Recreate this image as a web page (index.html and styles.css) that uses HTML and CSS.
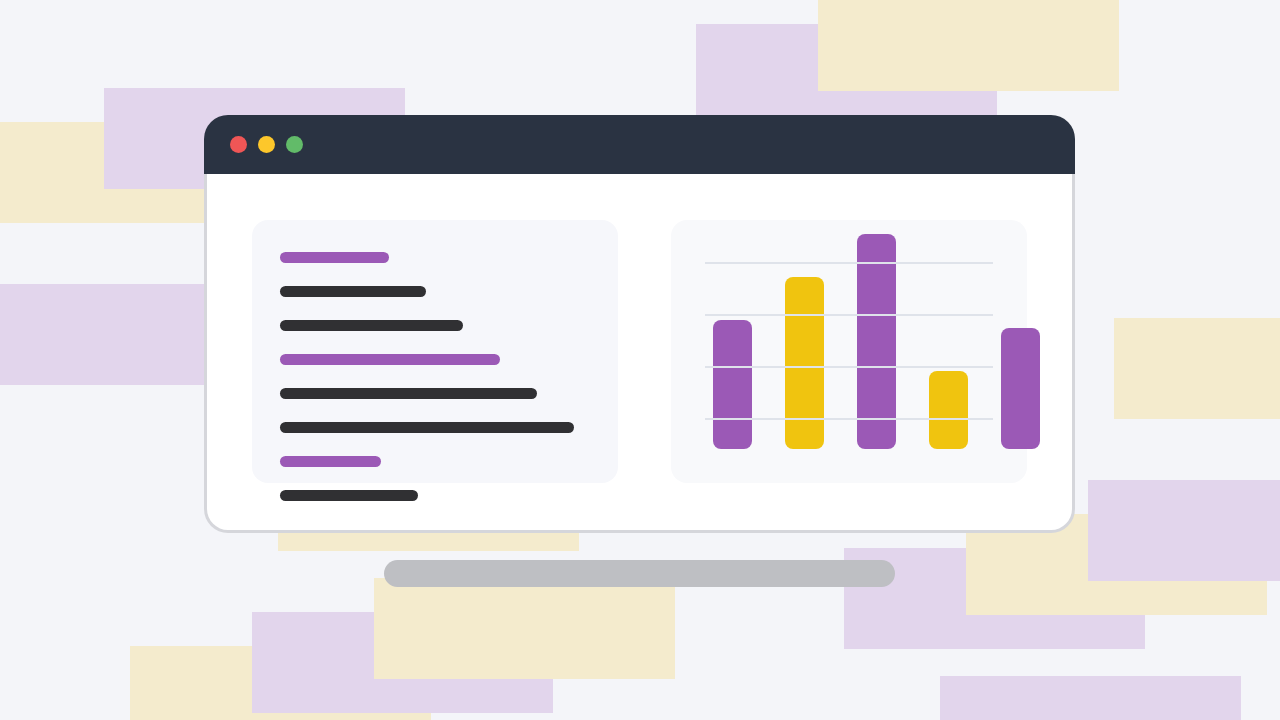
FILE: index.html
```html
<!DOCTYPE html>
<html lang="en">
<head>
  <meta charset="UTF-8">
  <meta name="viewport" content="width=device-width, initial-scale=1.0">
  <title>Dashboard Preview</title>
  <link rel="stylesheet" href="styles.css">
</head>
<body>
  <!-- scattered paper shapes behind the screen -->
  <div class="backdrop">
    <div class="tile yellow" style="left: -97px; top: 122px;"></div>
    <div class="tile purple" style="left: 104px; top: 88px;"></div>
    <div class="tile purple" style="left: -97px; top: 284px;"></div>
    <div class="tile purple" style="left: 696px; top: 24px;"></div>
    <div class="tile yellow" style="left: 818px; top: -10px;"></div>
    <div class="tile yellow" style="left: 1114px; top: 318px;"></div>
    <div class="tile yellow" style="left: 278px; top: 450px;"></div>
    <div class="tile purple" style="left: 844px; top: 548px;"></div>
    <div class="tile yellow" style="left: 966px; top: 514px;"></div>
    <div class="tile purple" style="left: 1088px; top: 480px;"></div>
    <div class="tile yellow" style="left: 130px; top: 646px;"></div>
    <div class="tile purple" style="left: 252px; top: 612px;"></div>
    <div class="tile yellow" style="left: 374px; top: 578px;"></div>
    <div class="tile purple" style="left: 940px; top: 676px;"></div>
  </div>

  <div class="scene">
    <div class="window">
      <div class="titlebar">
        <span class="dot red"></span>
        <span class="dot amber"></span>
        <span class="dot green"></span>
      </div>

      <div class="content">
        <div class="panel text-panel">
          <div class="line accent" style="width: 109px;"></div>
          <div class="line" style="width: 146px;"></div>
          <div class="line" style="width: 183px;"></div>
          <div class="line accent" style="width: 220px;"></div>
          <div class="line" style="width: 257px;"></div>
          <div class="line" style="width: 294px;"></div>
          <div class="line accent" style="width: 101px;"></div>
          <div class="line" style="width: 138px;"></div>
        </div>

        <div class="panel chart-panel">
          <div class="bars">
            <div class="bar purple-bar" style="height: 129px;"></div>
            <div class="bar yellow-bar" style="height: 172px;"></div>
            <div class="bar purple-bar" style="height: 215px;"></div>
            <div class="bar yellow-bar" style="height: 78px;"></div>
            <div class="bar purple-bar" style="height: 121px;"></div>
          </div>
          <div class="gridlines">
            <div class="gridline"></div>
            <div class="gridline"></div>
            <div class="gridline"></div>
            <div class="gridline"></div>
          </div>
        </div>
      </div>
    </div>

    <div class="stand"></div>
  </div>
</body>
</html>
```

FILE: styles.css
```css
html, body {
  margin: 0;
  height: 100%;
}
body {
  background-color: #f4f5f9;
  font-family: "Liberation Sans", Arial, sans-serif;
  overflow: hidden;
  position: relative;
}

/* background shapes */
.backdrop {
  position: absolute;
  inset: 0;
  overflow: hidden;
}
.tile {
  position: absolute;
  width: 301px;
  height: 101px;
}
.tile.purple {
  background-color: #e2d5ec;
}
.tile.yellow {
  background-color: #f4ebcd;
}

/* screen */
.scene {
  position: relative;
  display: flex;
  flex-direction: column;
  align-items: flex-start;
  padding: 115px 0 0 204px;
}
.window {
  width: 871px;
}
.titlebar {
  height: 59px;
  background-color: #2a3342;
  border-radius: 24px 24px 0 0;
  display: flex;
  align-items: center;
  gap: 11px;
  padding-left: 26px;
}
.dot {
  width: 17px;
  height: 17px;
  border-radius: 50%;
}
.dot.red {
  background-color: #ef5656;
}
.dot.amber {
  background-color: #fdc72b;
}
.dot.green {
  background-color: #62bb69;
}
.content {
  height: 359px;
  box-sizing: border-box;
  background-color: #fff;
  border: 3px solid #d5d6db;
  border-top: none;
  border-radius: 0 0 24px 24px;
  padding: 46px 45px 0;
  display: grid;
  grid-template-columns: 366px 356px;
  column-gap: 53px;
  align-items: start;
}
.panel {
  height: 263px;
  border-radius: 16px;
}

/* text lines */
.text-panel {
  background-color: #f6f7fb;
  padding: 32px 0 0 28px;
  box-sizing: border-box;
  display: flex;
  flex-direction: column;
  gap: 23px;
}
.line {
  height: 11px;
  flex-shrink: 0;
  border-radius: 6px;
  background-color: #303033;
}
.line.accent {
  background-color: #9b59b6;
}

/* bar chart */
.chart-panel {
  background-color: #f8f9fb;
  position: relative;
}
.bars {
  display: flex;
  align-items: flex-end;
  gap: 33px;
  height: 215px;
  padding: 14px 0 0 42px;
}
.bar {
  width: 39px;
  flex-shrink: 0;
  border-radius: 8px;
}
.purple-bar {
  background-color: #9b59b6;
}
.yellow-bar {
  background-color: #f0c40f;
}
.gridlines {
  position: absolute;
  left: 34px;
  top: 42px;
  width: 288px;
  display: flex;
  flex-direction: column;
  gap: 50px;
}
.gridline {
  height: 2px;
  background-color: #dfe3ea;
}

.stand {
  width: 511px;
  height: 27px;
  margin: 27px 0 0 180px;
  border-radius: 14px;
  background-color: #bebfc3;
}
```
